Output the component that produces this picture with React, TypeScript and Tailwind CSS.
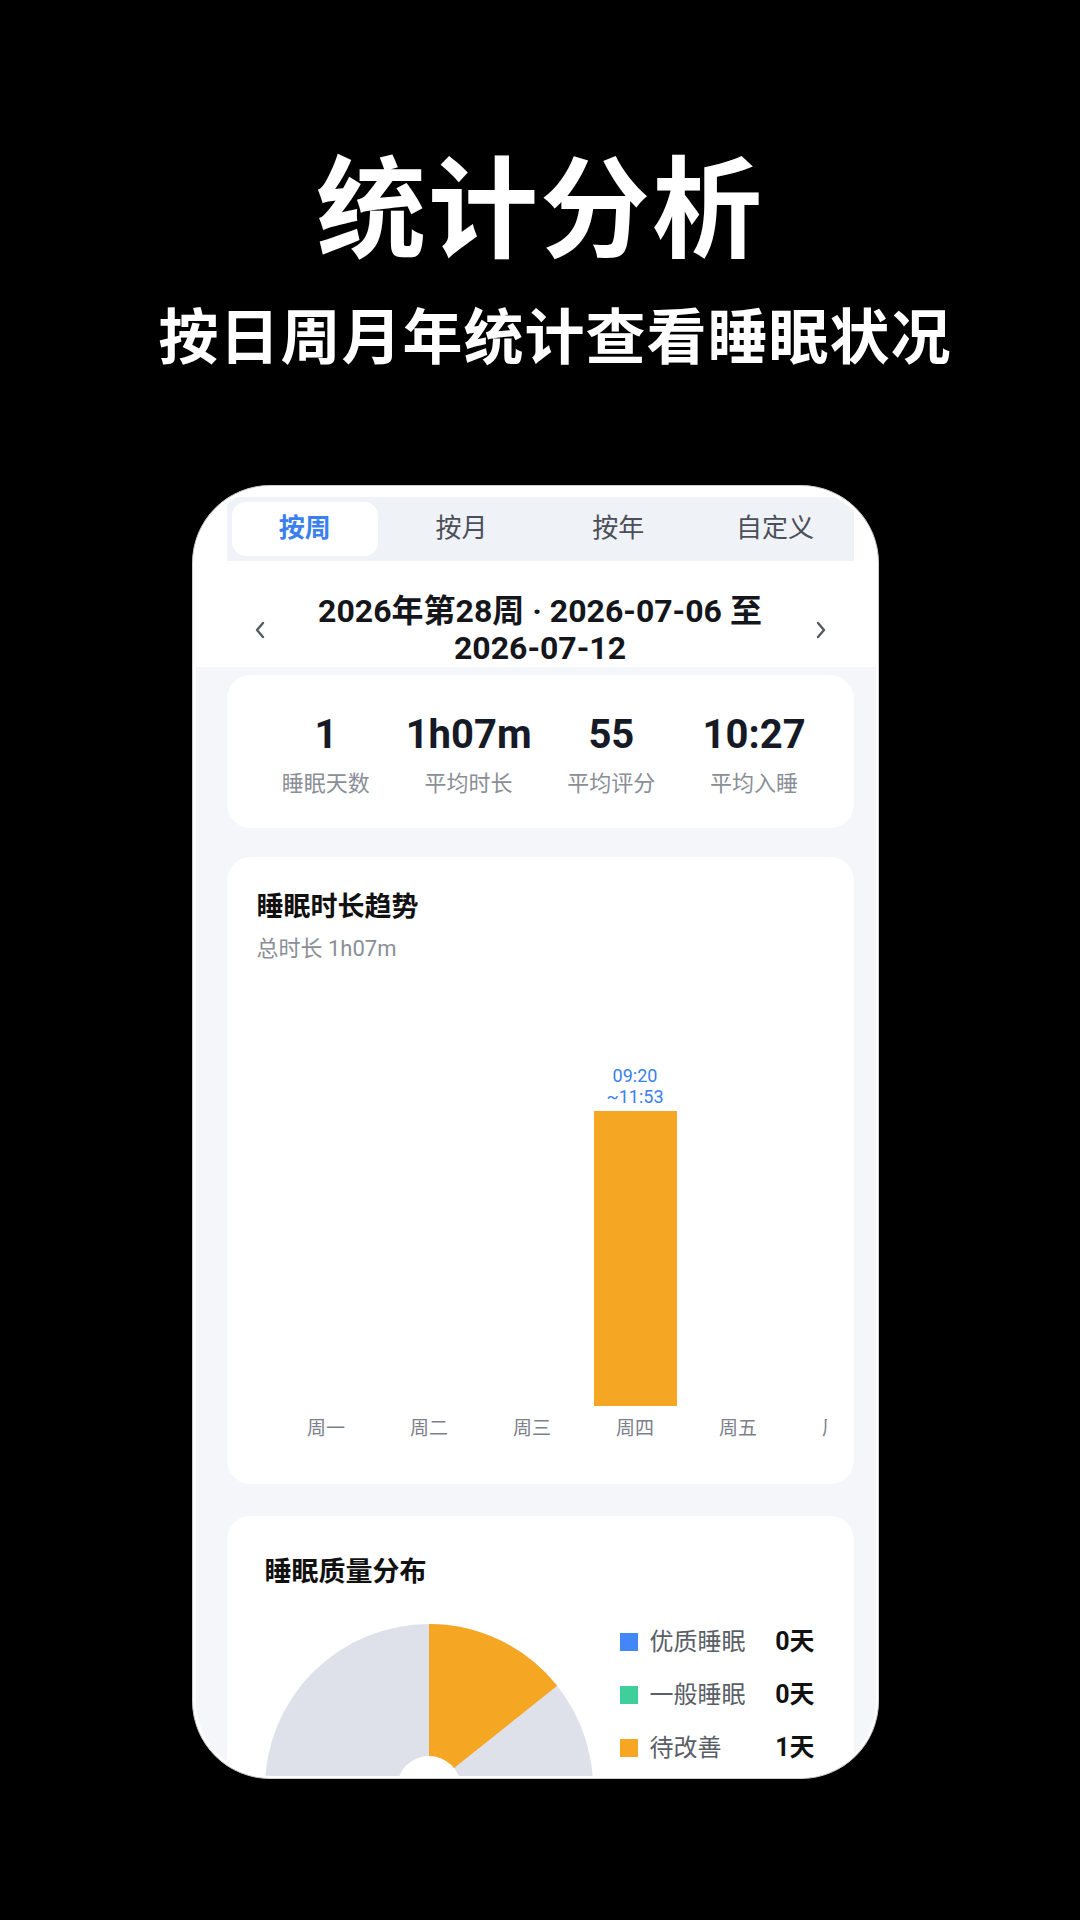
import React from 'react';

const tabs = ['按周', '按月', '按年', '自定义'];

const stats = [
  { value: '1', label: '睡眠天数' },
  { value: '1h07m', label: '平均时长' },
  { value: '55', label: '平均评分' },
  { value: '10:27', label: '平均入睡' },
];

const days = ['周一', '周二', '周三', '周四', '周五', '周六', '周日'];

const legend = [
  { color: 'bg-[#4287f5]', label: '优质睡眠', value: '0天' },
  { color: 'bg-[#3fcf9b]', label: '一般睡眠', value: '0天' },
  { color: 'bg-[#f5a623]', label: '待改善', value: '1天' },
];

const Chevron: React.FC<{ dir: 'left' | 'right' }> = ({ dir }) => (
  <svg width="12" height="18" viewBox="0 0 12 18" fill="none">
    <path
      d={dir === 'left' ? 'M9 2 L3 9 L9 16' : 'M3 2 L9 9 L3 16'}
      stroke="#555a63"
      strokeWidth="2.4"
      strokeLinecap="round"
      strokeLinejoin="round"
    />
  </svg>
);

const Pie: React.FC = () => {
  // 7 days total, 1 day "待改善"
  const r = 164;
  const angle = (2 * Math.PI) / 7;
  const x = r + r * Math.sin(angle);
  const y = r - r * Math.cos(angle);
  return (
    <svg width="328" height="328" viewBox="0 0 328 328" className="shrink-0">
      <circle cx={r} cy={r} r={r} fill="#dfe1ea" />
      <path d={`M${r} ${r} L${r} 0 A${r} ${r} 0 0 1 ${x} ${y} Z`} fill="#f5a623" />
      <circle cx={r} cy={r} r="32" fill="#ffffff" />
    </svg>
  );
};

const App: React.FC = () => {
  return (
    <div className="w-[1080px] h-[1920px] bg-black overflow-hidden flex flex-col font-['Roboto','Noto_Sans_CJK_SC',sans-serif]">
      <h1 className="mt-[146px] text-center text-white text-[110px] leading-[110px] font-bold tracking-[2px] font-['Noto_Sans_CJK_SC',sans-serif]">
        统计分析
      </h1>
      <p className="mt-[47px] pl-[30px] text-center text-white text-[60px] leading-[60px] font-bold tracking-[1px] font-['Noto_Sans_CJK_SC',sans-serif]">
        按日周月年统计查看睡眠状况
      </p>

      {/* phone */}
      <div className="mt-[122px] ml-[192px] w-[687px] h-[1294px] rounded-[78px] bg-white border-[1.5px] border-[#cdcdcd] p-[2.5px]">
        <div className="h-full rounded-[75px] overflow-hidden bg-[#f5f6fa]">
          {/* header */}
          <div className="bg-white pt-[8px] pl-[31px] pr-[22px]">
            <div className="grid grid-cols-4 h-[64px] bg-[#eff2f7]">
              {tabs.map((t, i) => (
                <div key={t} className="p-[5px]">
                  <div
                    className={
                      i === 0
                        ? 'h-full rounded-[14px] bg-white flex items-center justify-center text-[26px] font-bold text-[#3a80f0]'
                        : 'h-full flex items-center justify-center text-[26px] text-[#4b4f57]'
                    }
                  >
                    {t}
                  </div>
                </div>
              ))}
            </div>
            <div className="flex items-center pt-[32px] px-[27px]">
              <Chevron dir="left" />
              <div className="flex-1 text-center text-[32px] leading-[37px] font-bold text-[#14161c]">
                2026年第28周 · 2026-07-06 至
                <br />
                2026-07-12
              </div>
              <Chevron dir="right" />
            </div>
          </div>

          <div className="pl-[31px] pr-[22px] pt-[8px]">
            {/* stats */}
            <div className="bg-white rounded-[24px] px-[28px] pt-[36px] pb-[29px] grid grid-cols-4">
              {stats.map((s) => (
                <div key={s.label} className="flex flex-col items-center">
                  <div className="text-[40px] leading-[48px] font-bold text-[#151a26]">{s.value}</div>
                  <div className="mt-[10px] text-[22px] leading-[30px] text-[#8a8e96]">{s.label}</div>
                </div>
              ))}
            </div>

            {/* trend */}
            <div className="mt-[29px] bg-white rounded-[24px] pl-[30px] pr-[27px] pt-[32px] pb-[43px]">
              <div className="text-[27px] leading-[36px] font-bold text-[#111111]">睡眠时长趋势</div>
              <div className="mt-[9px] text-[22px] leading-[30px] text-[#8a8e96]">总时长 1h07m</div>
              <div className="overflow-hidden">
                <div className="flex pl-[18px] w-max">
                  {days.map((d, i) => (
                    <div key={d} className="w-[103px] flex flex-col items-center">
                      <div className="h-[442px] w-full flex flex-col items-center justify-end">
                        {i === 3 && (
                          <>
                            <div className="mb-[4px] text-center text-[18px] leading-[21px] text-[#3a80f0]">
                              09:20
                              <br />
                              ~11:53
                            </div>
                            <div className="w-[83px] h-[295px] bg-[#f5a623]" />
                          </>
                        )}
                      </div>
                      <div className="mt-[11px] text-[19px] leading-[24px] text-[#7c8089]">{d}</div>
                    </div>
                  ))}
                </div>
              </div>
            </div>

            {/* quality */}
            <div className="mt-[32px] bg-white rounded-[24px] pl-[38px] pr-[38px] pt-[38px] pb-[80px]">
              <div className="text-[27px] leading-[36px] font-bold text-[#111111]">睡眠质量分布</div>
              <div className="mt-[34px] flex items-start">
                <Pie />
                <div className="ml-[27px] w-[195px] flex flex-col gap-[17px]">
                  {legend.map((l) => (
                    <div key={l.label} className="flex items-center h-[36px]">
                      <div className={`w-[18px] h-[18px] ${l.color}`} />
                      <div className="ml-[12px] flex-1 text-[24px] text-[#5a5e66]">{l.label}</div>
                      <div className="text-[25px] font-bold text-[#111111]">{l.value}</div>
                    </div>
                  ))}
                </div>
              </div>
            </div>
          </div>
        </div>
      </div>
    </div>
  );
};

export default App;
